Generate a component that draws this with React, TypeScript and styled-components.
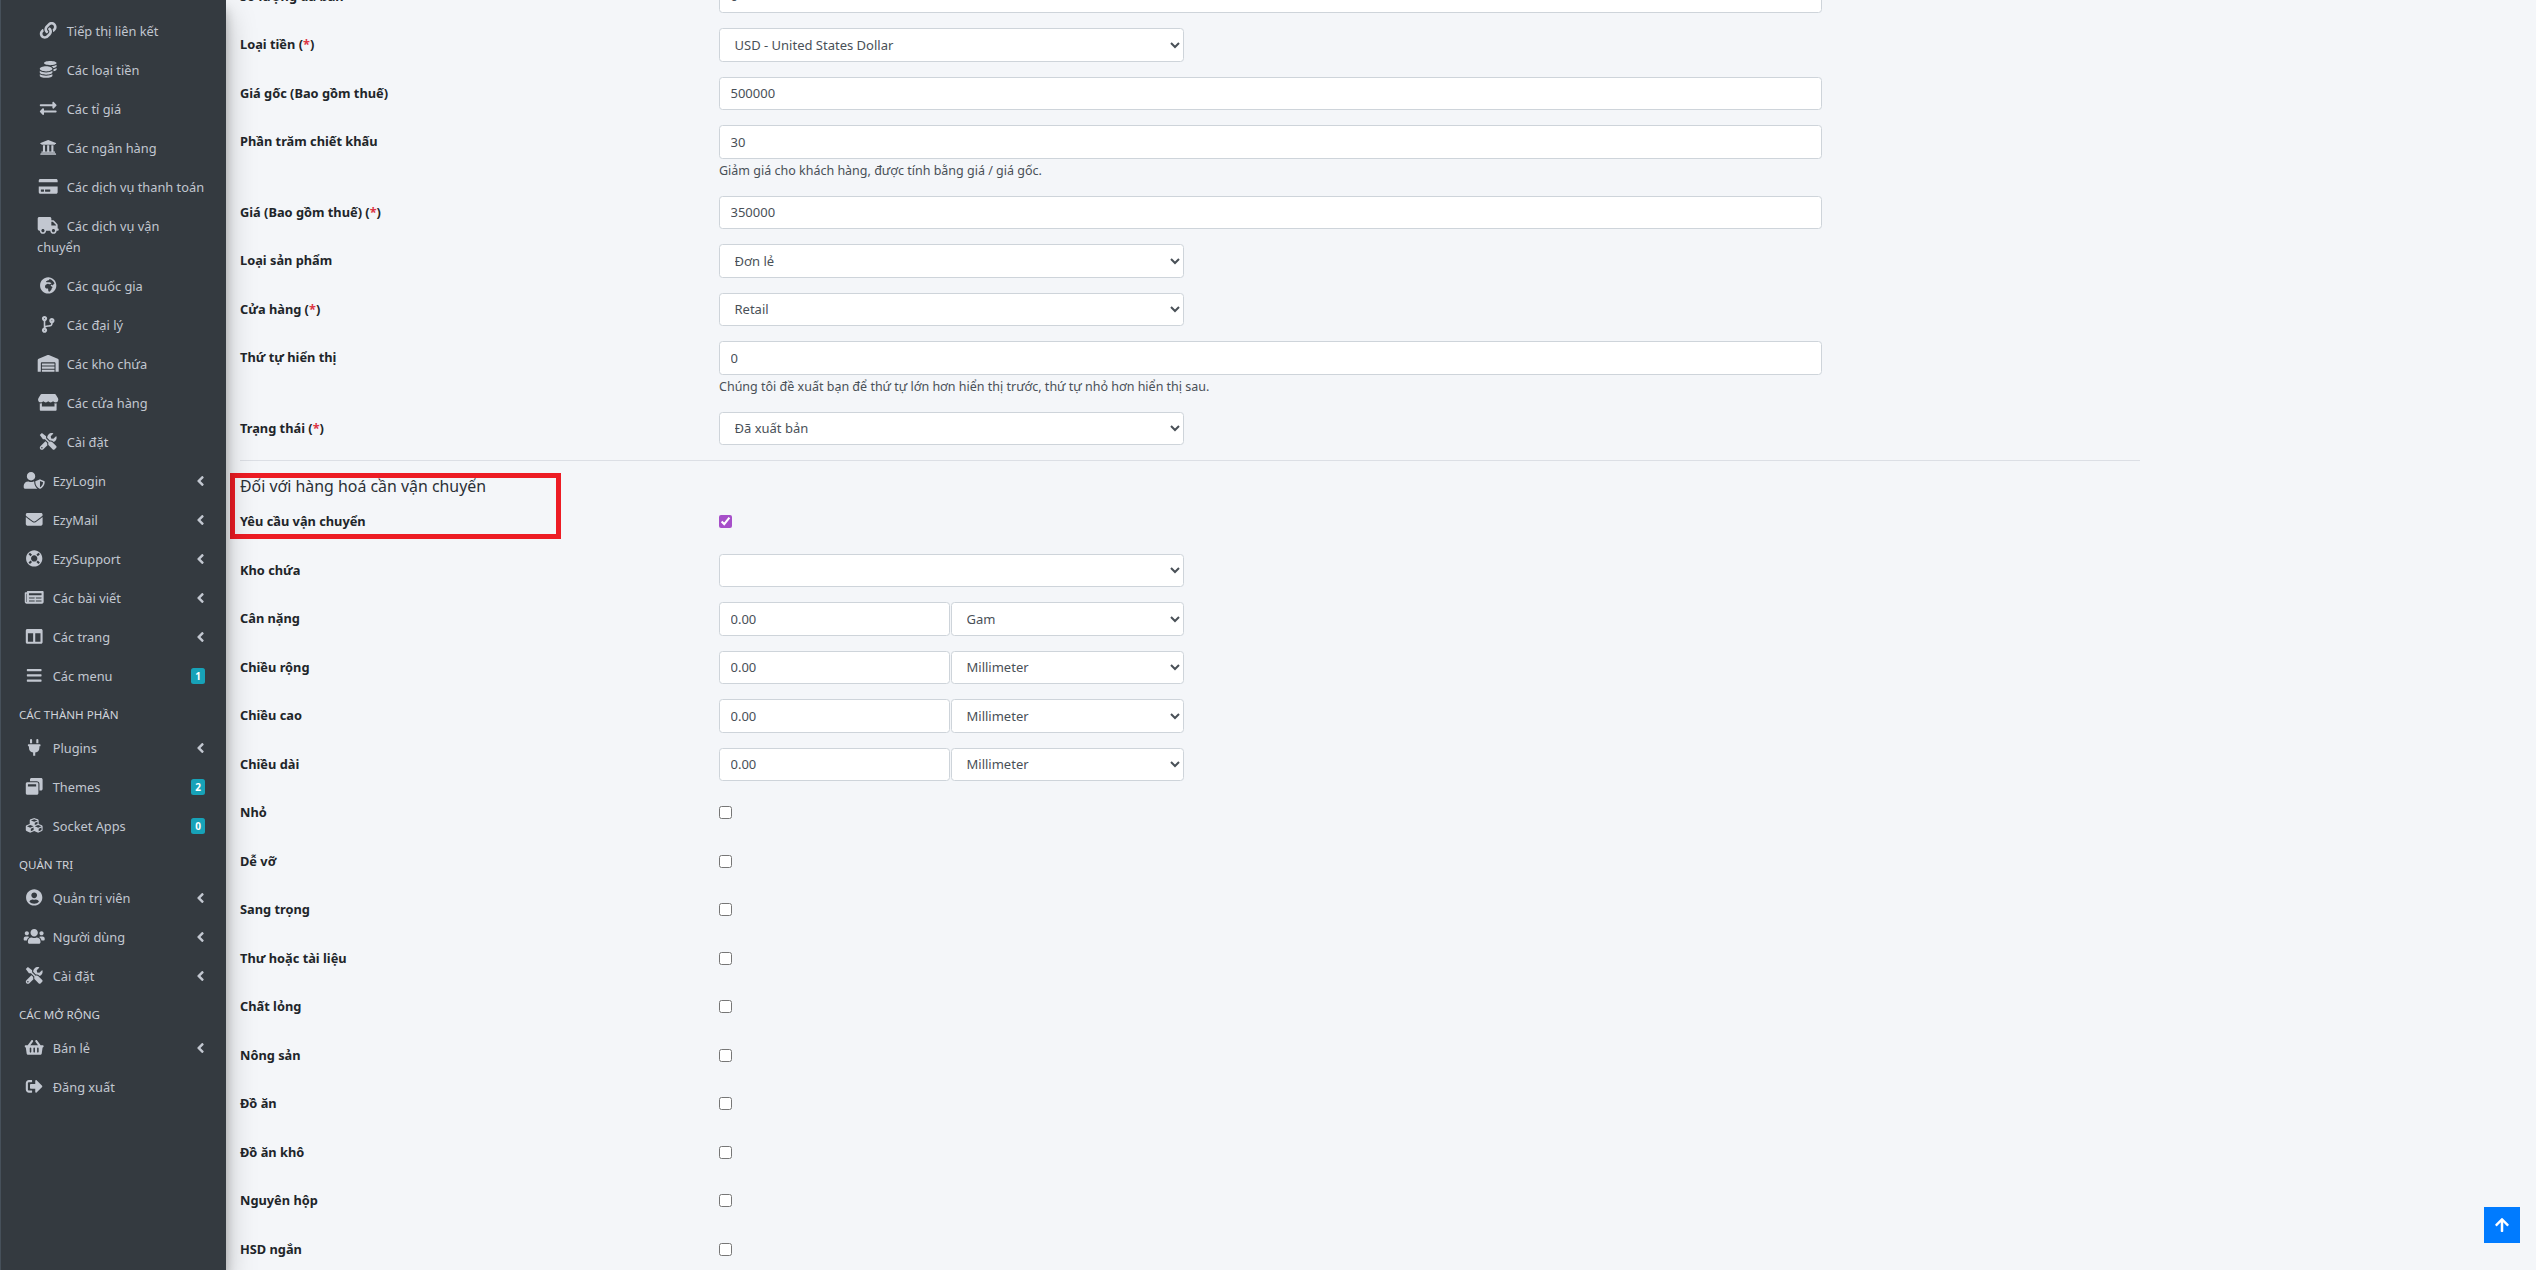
import React from "react";
import styled, { createGlobalStyle } from "styled-components";
import {
  FaLink, FaCoins, FaExchangeAlt, FaUniversity, FaCreditCard, FaTruck, FaGlobeAfrica, FaCodeBranch,
  FaWarehouse, FaStore, FaTools, FaUserShield, FaEnvelope, FaLifeRing, FaNewspaper, FaColumns, FaBars,
  FaPlug, FaWindowRestore, FaCubes, FaUserCircle, FaUsers, FaShoppingBasket, FaSignOutAlt, FaAngleLeft, FaArrowUp,
} from "react-icons/fa";

const FONT = `"Noto Sans", "Open Sans", sans-serif`;

const Global = createGlobalStyle`
  html, body { margin: 0; padding: 0; height: 1270px; overflow: hidden; background: #f4f6f9; }
  body { font-family: ${FONT}; font-size: 13px; line-height: 21px; color: #212529; }
  * { box-sizing: border-box; }
`;

const Shell = styled.div`
  display: flex;
  height: 1270px;
  overflow: hidden;
`;

const Sidebar = styled.aside`
  width: 226px;
  flex: none;
  height: 1270px;
  padding-top: 12.5px;
  background: #343a40;
  border-left: 1px solid #46505a;
  box-shadow: 0 14px 28px rgba(0, 0, 0, 0.25), 0 10px 10px rgba(0, 0, 0, 0.22);
  color: #c2c7d0;
  position: relative;
  z-index: 2;
`;

const NavItem = styled.a<{ $sub?: boolean }>`
  display: block;
  position: relative;
  margin-bottom: 2px;
  padding: 8px 20px 8px ${(p) => (p.$sub ? "36px" : "22px")};
  line-height: 21px;
  font-size: 12.8px;
  color: #c2c7d0;
  svg.nav-icon {
    display: inline-block;
    width: 22.4px;
    height: 16.8px;
    margin-right: 4px;
    vertical-align: -3px;
  }
`;

const Chevron = styled(FaAngleLeft)`
  position: absolute;
  right: 20px;
  top: 10px;
  width: 11px;
  height: 16px;
`;

const Badge = styled.span`
  position: absolute;
  right: 21px;
  top: 10.5px;
  width: 14px;
  height: 16px;
  border-radius: 2.5px;
  background: #17a2b8;
  color: #fff;
  font-size: 10px;
  font-weight: 700;
  line-height: 16px;
  text-align: center;
`;

const NavHeader = styled.div`
  height: 33px;
  padding: 7px 16px 5px 18px;
  font-size: 11.6px;
  line-height: 21px;
  color: #d0d4db;
  text-transform: uppercase;
  white-space: nowrap;
`;

const Main = styled.main`
  flex: 1;
  padding: 0 0 0 14px;
  background: #f4f6f9;
`;

const Form = styled.form`
  width: 1900px;
  margin-top: -20.5px;
`;

const Row = styled.div`
  display: grid;
  grid-template-columns: 479px 1103px;
  margin-bottom: 15px;
`;

const Label = styled.label`
  padding-top: 6px;
  font-size: 12.8px;
  font-weight: 700;
  line-height: 21px;
  color: #212529;
`;

const Required = styled.span`
  color: #dc3545;
`;

const Field = styled.div<{ $narrow?: boolean }>`
  width: ${(p) => (p.$narrow ? "465px" : "100%")};
`;

const controlStyles = `
  height: 33.5px;
  background-color: #fff;
  border: 1px solid #ced4da;
  border-radius: 3.5px;
  color: #495057;
  font-family: ${FONT};
  font-size: 13px;
  line-height: 21px;
  outline: none;
`;

const Input = styled.input`
  ${controlStyles}
  display: block;
  width: 100%;
  padding: 0 10.5px;
`;

const Select = styled.select`
  ${controlStyles}
  display: block;
  width: 100%;
  padding: 0 10.5px;
`;

const Group = styled.div`
  display: grid;
  grid-template-columns: 231px 233px;
  gap: 1px;
  width: 465px;
`;

const Help = styled.small`
  display: block;
  height: 22px;
  padding-top: 1px;
  font-size: 12.5px;
  line-height: 21px;
  color: #495057;
`;

const Divider = styled.hr`
  height: 1px;
  margin: 0 0 15px;
  border: 0;
  background: #dcdfe5;
`;

const HeadingBox = styled.div`
  position: relative;
  margin-bottom: 8px;
`;

const Heading = styled.h5`
  margin: 0;
  font-size: 15.9px;
  font-weight: 400;
  line-height: 21px;
  color: #2b3036;
`;

const Callout = styled.div`
  position: absolute;
  left: -10px;
  top: -3px;
  width: 331px;
  height: 66px;
  border: 5px solid #ed1c24;
  pointer-events: none;
`;

const CheckCell = styled.div`
  display: flex;
  align-items: center;
  height: 33.5px;
`;

const Check = styled.input`
  width: 13px;
  height: 13px;
  margin: 0;
  accent-color: #a64fc9;
`;

const ScrollTop = styled.button`
  position: fixed;
  right: 16px;
  bottom: 27px;
  display: flex;
  align-items: center;
  justify-content: center;
  width: 36px;
  height: 36px;
  padding: 0;
  border: 0;
  background: #007bff;
  color: #fff;
  font-size: 16px;
`;

type Nav =
  | { kind: "h"; text: string }
  | { kind: "i"; icon: React.ComponentType<{ className?: string }>; text: string; sub?: boolean; arrow?: boolean; badge?: string };

const nav: Nav[] = [
  { kind: "i", icon: FaLink, text: "Tiếp thị liên kết", sub: true },
  { kind: "i", icon: FaCoins, text: "Các loại tiền", sub: true },
  { kind: "i", icon: FaExchangeAlt, text: "Các tỉ giá", sub: true },
  { kind: "i", icon: FaUniversity, text: "Các ngân hàng", sub: true },
  { kind: "i", icon: FaCreditCard, text: "Các dịch vụ thanh toán", sub: true },
  { kind: "i", icon: FaTruck, text: "Các dịch vụ vận chuyển", sub: true },
  { kind: "i", icon: FaGlobeAfrica, text: "Các quốc gia", sub: true },
  { kind: "i", icon: FaCodeBranch, text: "Các đại lý", sub: true },
  { kind: "i", icon: FaWarehouse, text: "Các kho chứa", sub: true },
  { kind: "i", icon: FaStore, text: "Các cửa hàng", sub: true },
  { kind: "i", icon: FaTools, text: "Cài đặt", sub: true },
  { kind: "i", icon: FaUserShield, text: "EzyLogin", arrow: true },
  { kind: "i", icon: FaEnvelope, text: "EzyMail", arrow: true },
  { kind: "i", icon: FaLifeRing, text: "EzySupport", arrow: true },
  { kind: "i", icon: FaNewspaper, text: "Các bài viết", arrow: true },
  { kind: "i", icon: FaColumns, text: "Các trang", arrow: true },
  { kind: "i", icon: FaBars, text: "Các menu", badge: "1" },
  { kind: "h", text: "Các thành phần" },
  { kind: "i", icon: FaPlug, text: "Plugins", arrow: true },
  { kind: "i", icon: FaWindowRestore, text: "Themes", badge: "2" },
  { kind: "i", icon: FaCubes, text: "Socket Apps", badge: "0" },
  { kind: "h", text: "Quản trị" },
  { kind: "i", icon: FaUserCircle, text: "Quản trị viên", arrow: true },
  { kind: "i", icon: FaUsers, text: "Người dùng", arrow: true },
  { kind: "i", icon: FaTools, text: "Cài đặt", arrow: true },
  { kind: "h", text: "Các mở rộng" },
  { kind: "i", icon: FaShoppingBasket, text: "Bán lẻ", arrow: true },
  { kind: "i", icon: FaSignOutAlt, text: "Đăng xuất" },
];

const Req = () => (
  <>
    {" ("}
    <Required>*</Required>)
  </>
);

const SelectRow = ({ label, value, req }: { label: string; value: string; req?: boolean }) => (
  <Row>
    <Label>
      {label}
      {req && <Req />}
    </Label>
    <Field $narrow>
      <Select defaultValue={value}>
        <option>{value}</option>
      </Select>
    </Field>
  </Row>
);

const InputRow = ({ label, value, req, help }: { label: string; value: string; req?: boolean; help?: string }) => (
  <Row>
    <Label>
      {label}
      {req && <Req />}
    </Label>
    <Field>
      <Input defaultValue={value} />
      {help && <Help>{help}</Help>}
    </Field>
  </Row>
);

const UnitRow = ({ label, unit }: { label: string; unit: string }) => (
  <Row>
    <Label>{label}</Label>
    <Group>
      <Input defaultValue="0.00" />
      <Select defaultValue={unit}>
        <option>{unit}</option>
      </Select>
    </Group>
  </Row>
);

const CheckRow = ({ label, checked }: { label: string; checked?: boolean }) => (
  <Row>
    <Label>{label}</Label>
    <CheckCell>
      <Check type="checkbox" defaultChecked={checked} />
    </CheckCell>
  </Row>
);

export default function App() {
  return (
    <>
      <Global />
      <Shell>
        <Sidebar>
          {nav.map((n, i) =>
            n.kind === "h" ? (
              <NavHeader key={i}>{n.text}</NavHeader>
            ) : (
              <NavItem key={i} $sub={n.sub}>
                <n.icon className="nav-icon" /> {n.text}
                {n.arrow && <Chevron />}
                {n.badge && <Badge>{n.badge}</Badge>}
              </NavItem>
            )
          )}
        </Sidebar>
        <Main>
          <Form>
            <InputRow label="Số lượng đã bán" value="0" />
            <SelectRow label="Loại tiền" value="USD - United States Dollar" req />
            <InputRow label="Giá gốc (Bao gồm thuế)" value="500000" />
            <InputRow label="Phần trăm chiết khấu" value="30" help="Giảm giá cho khách hàng, được tính bằng giá / giá gốc." />
            <InputRow label="Giá (Bao gồm thuế)" value="350000" req />
            <SelectRow label="Loại sản phẩm" value="Đơn lẻ" />
            <SelectRow label="Cửa hàng" value="Retail" req />
            <InputRow label="Thứ tự hiển thị" value="0" help="Chúng tôi đề xuất bạn để thứ tự lớn hơn hiển thị trước, thứ tự nhỏ hơn hiển thị sau." />
            <SelectRow label="Trạng thái" value="Đã xuất bản" req />
            <Divider />
            <HeadingBox>
              <Heading>Đối với hàng hoá cần vận chuyển</Heading>
              <Callout />
            </HeadingBox>
            <CheckRow label="Yêu cầu vận chuyển" checked />
            <SelectRow label="Kho chứa" value="" />
            <UnitRow label="Cân nặng" unit="Gam" />
            <UnitRow label="Chiều rộng" unit="Millimeter" />
            <UnitRow label="Chiều cao" unit="Millimeter" />
            <UnitRow label="Chiều dài" unit="Millimeter" />
            {["Nhỏ", "Dễ vỡ", "Sang trọng", "Thư hoặc tài liệu", "Chất lỏng", "Nông sản", "Đồ ăn", "Đồ ăn khô", "Nguyên hộp", "HSD ngắn"].map((l) => (
              <CheckRow key={l} label={l} />
            ))}
          </Form>
        </Main>
      </Shell>
      <ScrollTop type="button" aria-label="Lên đầu trang">
        <FaArrowUp />
      </ScrollTop>
    </>
  );
}
